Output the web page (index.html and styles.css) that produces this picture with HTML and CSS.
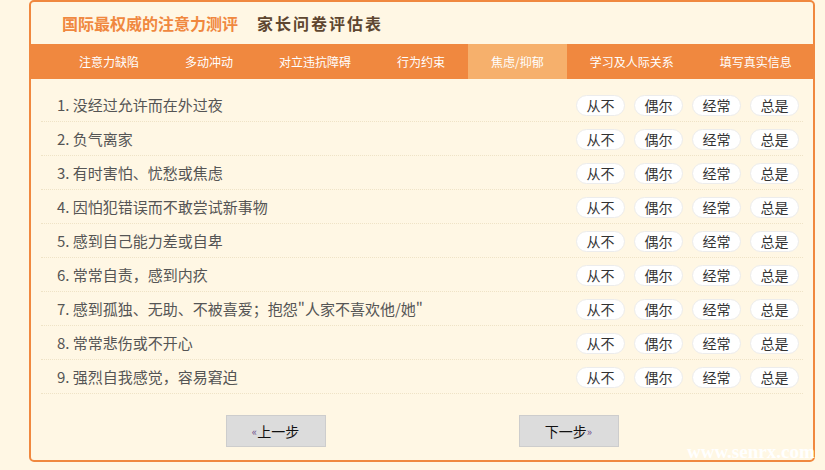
FILE: index.html
```html
<!DOCTYPE html>
<html lang="zh-CN">
<head>
<meta charset="utf-8">
<title>家长问卷评估表</title>
<link rel="stylesheet" href="styles.css">
</head>
<body>
<div class="card">
  <div class="header">
    <span class="brand">国际最权威的注意力测评</span>
    <span class="title">家长问卷评估表</span>
  </div>
  <div class="nav">
    <span class="tab">注意力缺陷</span>
    <span class="tab">多动冲动</span>
    <span class="tab">对立违抗障碍</span>
    <span class="tab">行为约束</span>
    <span class="tab active">焦虑/抑郁</span>
    <span class="tab">学习及人际关系</span>
    <span class="tab">填写真实信息</span>
  </div>
  <div class="list">
    <div class="row"><span class="q">1. 没经过允许而在外过夜</span><div class="opts"><span class="opt">从不</span><span class="opt">偶尔</span><span class="opt">经常</span><span class="opt">总是</span></div></div>
    <div class="row"><span class="q">2. 负气离家</span><div class="opts"><span class="opt">从不</span><span class="opt">偶尔</span><span class="opt">经常</span><span class="opt">总是</span></div></div>
    <div class="row"><span class="q">3. 有时害怕、忧愁或焦虑</span><div class="opts"><span class="opt">从不</span><span class="opt">偶尔</span><span class="opt">经常</span><span class="opt">总是</span></div></div>
    <div class="row"><span class="q">4. 因怕犯错误而不敢尝试新事物</span><div class="opts"><span class="opt">从不</span><span class="opt">偶尔</span><span class="opt">经常</span><span class="opt">总是</span></div></div>
    <div class="row"><span class="q">5. 感到自己能力差或自卑</span><div class="opts"><span class="opt">从不</span><span class="opt">偶尔</span><span class="opt">经常</span><span class="opt">总是</span></div></div>
    <div class="row"><span class="q">6. 常常自责，感到内疚</span><div class="opts"><span class="opt">从不</span><span class="opt">偶尔</span><span class="opt">经常</span><span class="opt">总是</span></div></div>
    <div class="row"><span class="q">7. 感到孤独、无助、不被喜爱；抱怨"人家不喜欢他/她"</span><div class="opts"><span class="opt">从不</span><span class="opt">偶尔</span><span class="opt">经常</span><span class="opt">总是</span></div></div>
    <div class="row"><span class="q">8. 常常悲伤或不开心</span><div class="opts"><span class="opt">从不</span><span class="opt">偶尔</span><span class="opt">经常</span><span class="opt">总是</span></div></div>
    <div class="row"><span class="q">9. 强烈自我感觉，容易窘迫</span><div class="opts"><span class="opt">从不</span><span class="opt">偶尔</span><span class="opt">经常</span><span class="opt">总是</span></div></div>
  </div>
  <div class="pager">
    <span class="step"><span class="arr">«</span>上一步</span>
    <span class="step">下一步<span class="arr">»</span></span>
  </div>
  <span class="watermark">www.senrx.com</span>
</div>
</body>
</html>
```

FILE: styles.css
```css
html, body {
  margin: 0;
  padding: 0;
}
body {
  background: #fff7e4;
  font-family: "Noto Sans CJK SC", "Liberation Sans", sans-serif;
  width: 825px;
  height: 470px;
  overflow: hidden;
}
.card {
  position: relative;
  box-sizing: border-box;
  margin-left: 29px;
  width: 786px;
  height: 462px;
  border: 2px solid #f0883f;
  border-radius: 5px;
}
.header {
  height: 42px;
  display: flex;
  align-items: center;
  padding-left: 31px;
  box-sizing: border-box;
}
.brand {
  color: #f0883f;
  font-weight: bold;
  font-size: 16px;
  line-height: 20px;
}
.title {
  margin-left: 19px;
  color: #5e4630;
  font-size: 16px;
  font-weight: bold;
  letter-spacing: 2px;
  line-height: 20px;
}
.nav {
  height: 35px;
  background: #f0883f;
  display: flex;
  padding-left: 25px;
  overflow: hidden;
}
.tab {
  flex-shrink: 0;
  white-space: nowrap;
  display: flex;
  align-items: center;
  padding: 0 23px;
  color: #fff;
  font-size: 12px;
}
.tab.active {
  background: #f6b06c;
}
.list {
  margin: 9px 10px 0 10px;
}
.row {
  height: 34px;
  box-sizing: border-box;
  border-bottom: 1px dotted #efe3c6;
  display: flex;
  align-items: center;
  justify-content: space-between;
  padding: 0 4px 0 16px;
}
.q {
  font-size: 15px;
  color: #555;
  line-height: 20px;
}
.opts {
  display: flex;
  gap: 9px;
  margin-top: 1px;
}
.opt {
  box-sizing: border-box;
  width: 49px;
  height: 21px;
  border: 1px solid #ececec;
  border-radius: 11px;
  background: #fff;
  font-size: 14px;
  color: #333;
  display: flex;
  align-items: center;
  justify-content: center;
}
.pager {
  margin-top: 21px;
  display: flex;
  justify-content: center;
  gap: 193px;
}
.step {
  box-sizing: border-box;
  width: 100px;
  height: 32px;
  background: #dcdcdc;
  border: 1px solid #cdcdcd;
  display: flex;
  align-items: center;
  justify-content: center;
  font-size: 14px;
  color: #111;
}
.arr {
  font-size: 11px;
  color: #6a4a8a;
}
.watermark {
  position: absolute;
  left: 656px;
  top: 439px;
  font-family: "Liberation Serif", serif;
  font-weight: bold;
  font-size: 19px;
  line-height: 22px;
  color: #fff;
  white-space: nowrap;
}
```
